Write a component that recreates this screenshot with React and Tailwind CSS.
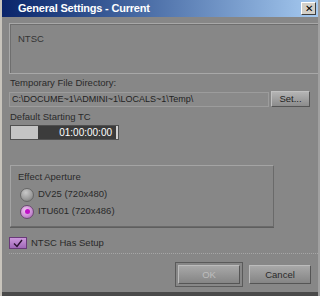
import React from "react";

const Radio = ({ checked, label }) => (
  <div className="flex items-center h-[17px]">
    {checked ? (
      <div className="w-[14px] h-[14px] rounded-full border border-[#6a4a70] bg-[radial-gradient(circle_at_40%_35%,#f2c8f2,#c68ad0_60%,#9a5aa8)] flex items-center justify-center">
        <div className="w-[5px] h-[5px] rounded-full bg-[#c010c8]" />
      </div>
    ) : (
      <div className="w-[14px] h-[14px] rounded-full border border-[#666] bg-[radial-gradient(circle_at_40%_30%,#c8c8c8,#9a9a9a_60%,#707070)]" />
    )}
    <span className="ml-[4px] text-[9.5px] text-[#2a2a2a]">{label}</span>
  </div>
);

export default function App() {
  return (
    <div
      className="w-[320px] h-[296px] bg-[#878787] flex flex-col overflow-hidden border-l-2 border-l-[#c8c4bc] border-r-2 border-r-[#a0a0a0]"
      style={{ fontFamily: '"Liberation Sans", Arial, sans-serif' }}
    >
      {/* title bar */}
      <div className="h-[17px] shrink-0 bg-gradient-to-r from-[#0a246a] to-[#a6caf0] flex items-center pl-[16px] pr-[2px]">
        <span className="text-white font-bold text-[11px] tracking-[-0.2px]">
          General Settings - Current
        </span>
        <div className="ml-auto w-[15px] h-[13px] bg-[#d4d0c8] border border-t-white border-l-white border-r-[#404040] border-b-[#404040] flex items-center justify-center text-[10px] leading-none text-black">
          ✕
        </div>
      </div>

      <div className="flex-1 flex flex-col pl-[7px] pt-[6px]">
        {/* NTSC box */}
        <div className="h-[51px] shrink-0 -mr-[6px] border border-[#a8a8a8] shadow-[inset_1px_1px_0_#6e6e6e] pl-[8px] pt-[8px] text-[9.5px] text-[#333]">
          NTSC
        </div>

        <div className="mt-[3px] text-[9.5px] text-[#2a2a2a] leading-[12px] pl-[1px]">
          Temporary File Directory:
        </div>
        <div className="flex items-center mt-[2px]">
          <div className="w-[260px] h-[15px] border border-[#9c9c9c] bg-[#8a8a8a] pl-[2px] text-[9px] leading-[13px] text-[#222]">
            C:\DOCUME~1\ADMINI~1\LOCALS~1\Temp\
          </div>
          <div className="ml-[2px] w-[39px] h-[16px] border border-t-[#c0c0c0] border-l-[#c0c0c0] border-r-[#555] border-b-[#555] bg-gradient-to-b from-[#b4b4b4] to-[#8c8c8c] flex items-center justify-center text-[9.5px] text-[#222]">
            Set...
          </div>
        </div>

        <div className="mt-[4px] text-[9.5px] text-[#2a2a2a] leading-[12px] pl-[1px]">
          Default Starting TC
        </div>
        <div className="mt-[2px] ml-[1px] w-[109px] h-[15px] border border-[#505050] flex">
          <div className="w-[27px] bg-[#c4c4c4]" />
          <div className="flex-1 bg-[#3c3c3c] text-white text-[10px] leading-[13px] text-right pr-[4px]">
            01:00:00:00
          </div>
          <div className="w-[2px] bg-[#d0d0d0]" />
        </div>

        {/* Effect Aperture */}
        <div className="mt-[25px] ml-[1px] w-[264px] h-[62px] shrink-0 border border-[#a4a4a4] border-r-[#6a6a6a] border-b-[#6a6a6a] shadow-[0_1px_0_#5e5e5e] pl-[7px] pt-[5px]">
          <div className="text-[9.5px] leading-[12px] text-[#2a2a2a]">Effect Aperture</div>
          <div className="mt-[3px] pl-[2px]">
            <Radio label="DV25 (720x480)" />
            <Radio checked label="ITU601 (720x486)" />
          </div>
        </div>

        {/* checkbox */}
        <div className="mt-[9px] flex items-center">
          <div className="w-[18px] h-[12px] bg-gradient-to-b from-[#cc98dc] to-[#a068b8] border border-[#6a3a7a] flex items-center justify-center">
            <svg width="10" height="9" viewBox="0 0 10 9">
              <path d="M1 4.5 L4 7.5 L9 1" fill="none" stroke="#2a1030" strokeWidth="1.4" />
            </svg>
          </div>
          <span className="ml-[4px] text-[9.5px] text-[#2a2a2a]">NTSC Has Setup</span>
        </div>

        <div className="mt-[3px] -mr-[2px] border-t border-dotted border-[#a6a6a6]" />

        {/* buttons */}
        <div className="flex justify-end gap-[6px] mt-[11px] pr-[7px]">
          <div className="border border-[#5a5a5a] p-[2px] -my-[3px]">
            <div className="w-[62px] h-[19px] border border-t-[#bcbcbc] border-l-[#bcbcbc] border-r-[#555] border-b-[#555] bg-gradient-to-b from-[#a8a8a8] to-[#858585] flex items-center justify-center text-[9.5px] text-[#bdbdbd]">
              OK
            </div>
          </div>
          <div className="w-[62px] h-[19px] border border-t-[#bcbcbc] border-l-[#bcbcbc] border-r-[#555] border-b-[#555] bg-gradient-to-b from-[#a8a8a8] to-[#858585] flex items-center justify-center text-[9.5px] text-[#2a2a2a]">
            Cancel
          </div>
        </div>
      </div>
      <div className="h-[4px] shrink-0 bg-[#4a4a4a]" />
    </div>
  );
}
